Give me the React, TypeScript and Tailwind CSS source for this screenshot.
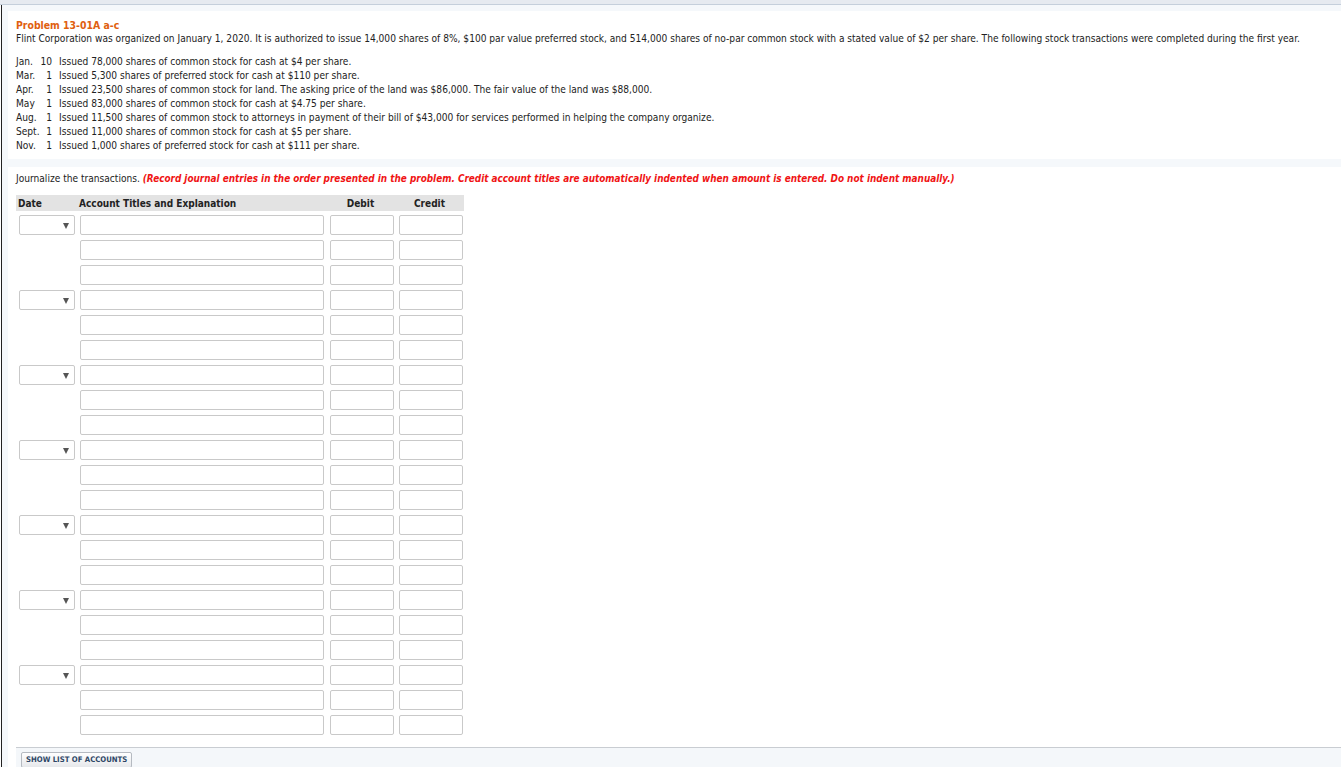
import React from "react";

const F = { fontFamily: "'DejaVu Sans Condensed','DejaVu Sans',sans-serif" };

const transactions: [string, string, string][] = [
  ["Jan.", "10", "Issued 78,000 shares of common stock for cash at $4 per share."],
  ["Mar.", "1", "Issued 5,300 shares of preferred stock for cash at $110 per share."],
  ["Apr.", "1", "Issued 23,500 shares of common stock for land. The asking price of the land was $86,000. The fair value of the land was $88,000."],
  ["May", "1", "Issued 83,000 shares of common stock for cash at $4.75 per share."],
  ["Aug.", "1", "Issued 11,500 shares of common stock to attorneys in payment of their bill of $43,000 for services performed in helping the company organize."],
  ["Sept.", "1", "Issued 11,000 shares of common stock for cash at $5 per share."],
  ["Nov.", "1", "Issued 1,000 shares of preferred stock for cash at $111 per share."],
];

function Row({ first }: { first: boolean }) {
  return (
    <div className="flex h-[20px] items-stretch">
      <div className="w-[64px] pl-[3px]">
        {first && (
          <div className="relative h-[20px] w-[56px] rounded-[2px] border border-[#c9c9c9] bg-white">
            <svg className="absolute left-[43px] top-[7px]" width="6" height="6" viewBox="0 0 6 6">
              <path d="M0 0 L6 0 L3 6 Z" fill="#555" />
            </svg>
          </div>
        )}
      </div>
      <div className="h-[20px] w-[244px] rounded-[2px] border border-[#c9c9c9] bg-white" />
      <div className="ml-[6px] h-[20px] w-[64px] rounded-[2px] border border-[#c9c9c9] bg-white" />
      <div className="ml-[5px] h-[20px] w-[64px] rounded-[2px] border border-[#c9c9c9] bg-white" />
    </div>
  );
}

export default function App() {
  const entries = Array.from({ length: 7 });
  return (
    <div className="h-[767px] overflow-hidden bg-white text-[#222]" style={F}>
      <div className="h-[5px] border-b border-[#c5cfdb] bg-[#e6eaf0]" />
      <div className="ml-px flex h-[762px] flex-col border-l border-[#222] bg-[#f5f8fb] pl-[6px] pt-[6px]">
        <div className="bg-white pb-[6px] pl-[8px] pt-[7px]">
          <div className="text-[10.4px] font-bold leading-[14px] text-[#e0600f]">Problem 13-01A a-c</div>
          <div className="text-[10.1px] leading-[14px]">
            Flint Corporation was organized on January 1, 2020. It is authorized to issue 14,000 shares of 8%, $100 par value preferred stock, and 514,000 shares of no-par common stock with a stated value of $2 per share. The following stock transactions were completed during the first year.
          </div>
          <div className="mt-[9px] text-[10.1px] leading-[14px]">
            {transactions.map(([m, d, t]) => (
              <div key={m} className="flex">
                <span className="w-[24px]">{m}</span>
                <span className="w-[12px] text-right">{d}</span>
                <span className="ml-[7px]">{t}</span>
              </div>
            ))}
          </div>
        </div>
        <div className="mt-[8px] flex flex-1 flex-col bg-white pl-[8px]">
          <div className="pt-[5px] text-[10.1px] leading-[14px]">
            Journalize the transactions.{" "}
            <span className="text-[9.9px] font-bold italic text-[#f01414]">
              (Record journal entries in the order presented in the problem. Credit account titles are automatically indented when amount is entered. Do not indent manually.)
            </span>
          </div>
          <div className="mt-[9px] flex h-[16px] w-[448px] items-center bg-[#e3e3e3] text-[10px] font-bold">
            <span className="w-[63px] pl-[2px]">Date</span>
            <span className="w-[247px]">Account Titles and Explanation</span>
            <span className="w-[69px] text-center">Debit</span>
            <span className="w-[69px] text-center">Credit</span>
          </div>
          <div className="mt-[4px] flex flex-col gap-[5px]">
            {entries.map((_, i) => (
              <React.Fragment key={i}>
                <Row first />
                <Row first={false} />
                <Row first={false} />
              </React.Fragment>
            ))}
          </div>
          <div className="mt-[12px] flex-1 border-t border-[#c9cdd2] bg-[#f4f7fa] pl-[5px] pt-[4px]">
            <button className="flex h-[16px] items-center rounded-[2px] border border-[#b5bac1] bg-gradient-to-b from-white to-[#e6e8eb] px-[4px] text-[7.7px] font-bold leading-[10px] text-[#2d4666]">
              SHOW LIST OF ACCOUNTS
            </button>
          </div>
        </div>
      </div>
    </div>
  );
}
